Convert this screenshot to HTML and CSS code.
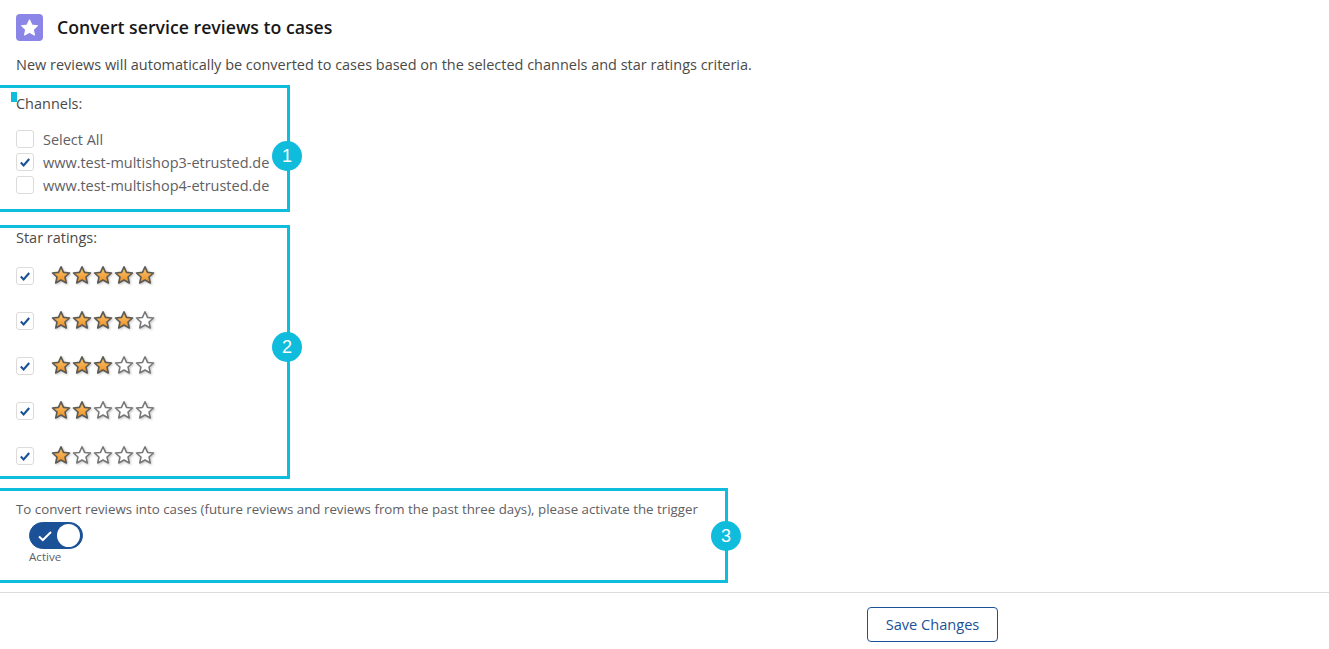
FILE: index.html
```html
<!DOCTYPE html>
<html lang="en">
<head>
    <meta charset="UTF-8">
    <title>Convert service reviews to cases</title>
    <link rel="stylesheet" href="styles.css">
</head>
<body>
    <svg class="defs" width="0" height="0">
        <defs>
            <linearGradient id="star-fill" x1="0" y1="0" x2="0" y2="1">
                <stop offset="0" stop-color="#fbc56f"/>
                <stop offset="1" stop-color="#ee8f22"/>
            </linearGradient>
            <symbol id="star-on" viewBox="0 0 20 20">
                <path d="M10 1.8l2.5 5.6 6 .6-4.5 4 1.3 6L10 15l-5.3 3 1.3-6-4.5-4 6-.6z" fill="url(#star-fill)" stroke="#5c5a55" stroke-width="1.6" stroke-linejoin="round"/>
            </symbol>
            <symbol id="star-off" viewBox="0 0 20 20">
                <path d="M10 1.8l2.5 5.6 6 .6-4.5 4 1.3 6L10 15l-5.3 3 1.3-6-4.5-4 6-.6z" fill="#fff" stroke="#77777a" stroke-width="1.5" stroke-linejoin="round"/>
            </symbol>
            <symbol id="tick" viewBox="0 0 12 12">
                <path d="M1.8 6.6l2.8 2.8 5.6-6.4" fill="none" stroke="#1b5297" stroke-width="2.1"/>
            </symbol>
        </defs>
    </svg>

    <div class="header">
        <span class="header-icon">
            <svg width="19" height="19" viewBox="0 0 20 20"><path d="M10 2l2.5 5.4 5.9.7-4.4 4 1.2 5.8L10 15l-5.2 2.9L6 12.1l-4.4-4 5.9-.7z" fill="#fff" stroke="#fff" stroke-width="1.2" stroke-linejoin="round"/></svg>
        </span>
        <h1>Convert service reviews to cases</h1>
    </div>
    <p class="intro">New reviews will automatically be converted to cases based on the selected channels and star ratings criteria.</p>

    <div class="box box-channels">
        <span class="marker"></span>
        <p class="box-title">Channels:</p>
        <div class="channel-list">
            <label class="check-row"><span class="checkbox"></span><span class="check-label">Select All</span></label>
            <label class="check-row"><span class="checkbox"><svg width="12" height="12"><use href="#tick"/></svg></span><span class="check-label">www.test-multishop3-etrusted.de</span></label>
            <label class="check-row"><span class="checkbox"></span><span class="check-label">www.test-multishop4-etrusted.de</span></label>
        </div>
        <span class="callout">1</span>
    </div>

    <div class="box box-stars">
        <p class="box-title">Star ratings:</p>
        <div class="rating-list">
            <div class="rating-row">
                <span class="checkbox"><svg width="12" height="12"><use href="#tick"/></svg></span>
                <span class="stars">
                    <svg width="20" height="20"><use href="#star-on"/></svg>
                    <svg width="20" height="20"><use href="#star-on"/></svg>
                    <svg width="20" height="20"><use href="#star-on"/></svg>
                    <svg width="20" height="20"><use href="#star-on"/></svg>
                    <svg width="20" height="20"><use href="#star-on"/></svg>
                </span>
            </div>
            <div class="rating-row">
                <span class="checkbox"><svg width="12" height="12"><use href="#tick"/></svg></span>
                <span class="stars">
                    <svg width="20" height="20"><use href="#star-on"/></svg>
                    <svg width="20" height="20"><use href="#star-on"/></svg>
                    <svg width="20" height="20"><use href="#star-on"/></svg>
                    <svg width="20" height="20"><use href="#star-on"/></svg>
                    <svg width="20" height="20"><use href="#star-off"/></svg>
                </span>
            </div>
            <div class="rating-row">
                <span class="checkbox"><svg width="12" height="12"><use href="#tick"/></svg></span>
                <span class="stars">
                    <svg width="20" height="20"><use href="#star-on"/></svg>
                    <svg width="20" height="20"><use href="#star-on"/></svg>
                    <svg width="20" height="20"><use href="#star-on"/></svg>
                    <svg width="20" height="20"><use href="#star-off"/></svg>
                    <svg width="20" height="20"><use href="#star-off"/></svg>
                </span>
            </div>
            <div class="rating-row">
                <span class="checkbox"><svg width="12" height="12"><use href="#tick"/></svg></span>
                <span class="stars">
                    <svg width="20" height="20"><use href="#star-on"/></svg>
                    <svg width="20" height="20"><use href="#star-on"/></svg>
                    <svg width="20" height="20"><use href="#star-off"/></svg>
                    <svg width="20" height="20"><use href="#star-off"/></svg>
                    <svg width="20" height="20"><use href="#star-off"/></svg>
                </span>
            </div>
            <div class="rating-row">
                <span class="checkbox"><svg width="12" height="12"><use href="#tick"/></svg></span>
                <span class="stars">
                    <svg width="20" height="20"><use href="#star-on"/></svg>
                    <svg width="20" height="20"><use href="#star-off"/></svg>
                    <svg width="20" height="20"><use href="#star-off"/></svg>
                    <svg width="20" height="20"><use href="#star-off"/></svg>
                    <svg width="20" height="20"><use href="#star-off"/></svg>
                </span>
            </div>
        </div>
        <span class="callout">2</span>
    </div>

    <div class="box box-trigger">
        <p class="trigger-text">To convert reviews into cases (future reviews and reviews from the past three days), please activate the trigger</p>
        <div class="toggle">
            <span class="toggle-track">
                <svg width="16" height="16" viewBox="0 0 16 16"><path d="M2 8.4l3.8 3.6L14 4" fill="none" stroke="#fff" stroke-width="2"/></svg>
                <span class="toggle-knob"></span>
            </span>
            <span class="toggle-label">Active</span>
        </div>
        <span class="callout">3</span>
    </div>

    <div class="footer">
        <button class="save-btn">Save Changes</button>
    </div>
</body>
</html>
```

FILE: styles.css
```css
body {
    font-family: "Open Sans", Arial, sans-serif;
    font-size: 14.48px;
    color: #4a4a48;
    background: #fff;
    margin: 0;
    height: 649px;
    overflow: hidden;
}

.defs {
    display: block;
}

.header {
    display: flex;
    align-items: center;
    height: 28px;
    padding: 13px 0 0 16px;
}

.header-icon {
    display: flex;
    align-items: center;
    justify-content: center;
    width: 27px;
    height: 27px;
    border-radius: 4px;
    background: #8b85e8;
}

h1 {
    margin: 0 0 0 14px;
    font-size: 17.7px;
    font-weight: 600;
    color: #181818;
}

.intro {
    margin: 14px 0 0 16px;
    height: 20px;
    line-height: 20px;
}

.box {
    position: relative;
    box-sizing: border-box;
    margin-left: -4px;
    padding-left: 20px;
    border: 3px solid #0fbcdc;
    border-left-style: none;
}

.box-channels {
    width: 294px;
    height: 127px;
    margin-top: 10px;
    padding-top: 6px;
}

.box-stars {
    width: 294px;
    height: 254px;
    margin-top: 13px;
    padding-top: 0;
}

.box-trigger {
    width: 732px;
    height: 95px;
    margin-top: 9px;
    padding-top: 8px;
}

.marker {
    position: absolute;
    left: 15px;
    top: 4px;
    width: 6px;
    height: 10px;
    background: #0fbcdc;
}

.box-title {
    margin: 0;
    line-height: 20px;
}

.channel-list {
    margin-top: 13px;
}

.check-row {
    display: flex;
    align-items: center;
    height: 23px;
    color: #5f6064;
}

.check-label {
    padding-top: 2px;
}

.checkbox {
    box-sizing: border-box;
    display: flex;
    align-items: center;
    justify-content: center;
    flex: none;
    width: 18px;
    height: 18px;
    margin-right: 9px;
    border: 1px solid #dddbda;
    border-radius: 3px;
    background: #fff;
}

.rating-list {
    margin-top: 5px;
}

.rating-row {
    display: flex;
    align-items: center;
    height: 45px;
}

.rating-row .checkbox {
    margin-right: 17px;
}

.stars {
    display: flex;
    gap: 1px;
    margin-bottom: 2px;
    filter: drop-shadow(1px 1px 1px rgba(90, 90, 90, 0.35));
}

.trigger-text {
    margin: 0;
    font-size: 13.3px;
    line-height: 20px;
    color: #5f6064;
}

.toggle {
    display: flex;
    flex-direction: column;
    align-items: flex-start;
    margin: 3px 0 0 13px;
}

.toggle-track {
    box-sizing: border-box;
    display: flex;
    align-items: center;
    justify-content: space-between;
    width: 54px;
    height: 27px;
    padding: 0 2px 0 7px;
    border-radius: 14px;
    border: 1px solid #1b5297;
    background: #1b5297;
}

.toggle-knob {
    width: 23px;
    height: 23px;
    border-radius: 50%;
    background: #fff;
}

.toggle-label {
    margin-top: 1px;
    font-size: 11.6px;
    line-height: 14px;
    color: #5f6064;
}

.callout {
    position: absolute;
    right: -15px;
    width: 30px;
    height: 30px;
    border-radius: 50%;
    background: #0fbcdc;
    color: #fff;
    font-family: "Liberation Sans", Arial, sans-serif;
    font-size: 18px;
    line-height: 30px;
    text-align: center;
}

.box-channels .callout {
    top: 53px;
}

.box-stars .callout {
    top: 104px;
}

.box-trigger .callout {
    top: 30px;
    right: -16px;
}

.footer {
    display: flex;
    margin-top: 9px;
    padding: 14px 0 0 867px;
    border-top: 1px solid #dddbda;
}

.save-btn {
    width: 131px;
    height: 35px;
    padding: 0 0 2px;
    font-family: inherit;
    font-size: 14.6px;
    color: #1b5297;
    background: #fff;
    border: 1px solid #1b5297;
    border-radius: 4px;
}
```
